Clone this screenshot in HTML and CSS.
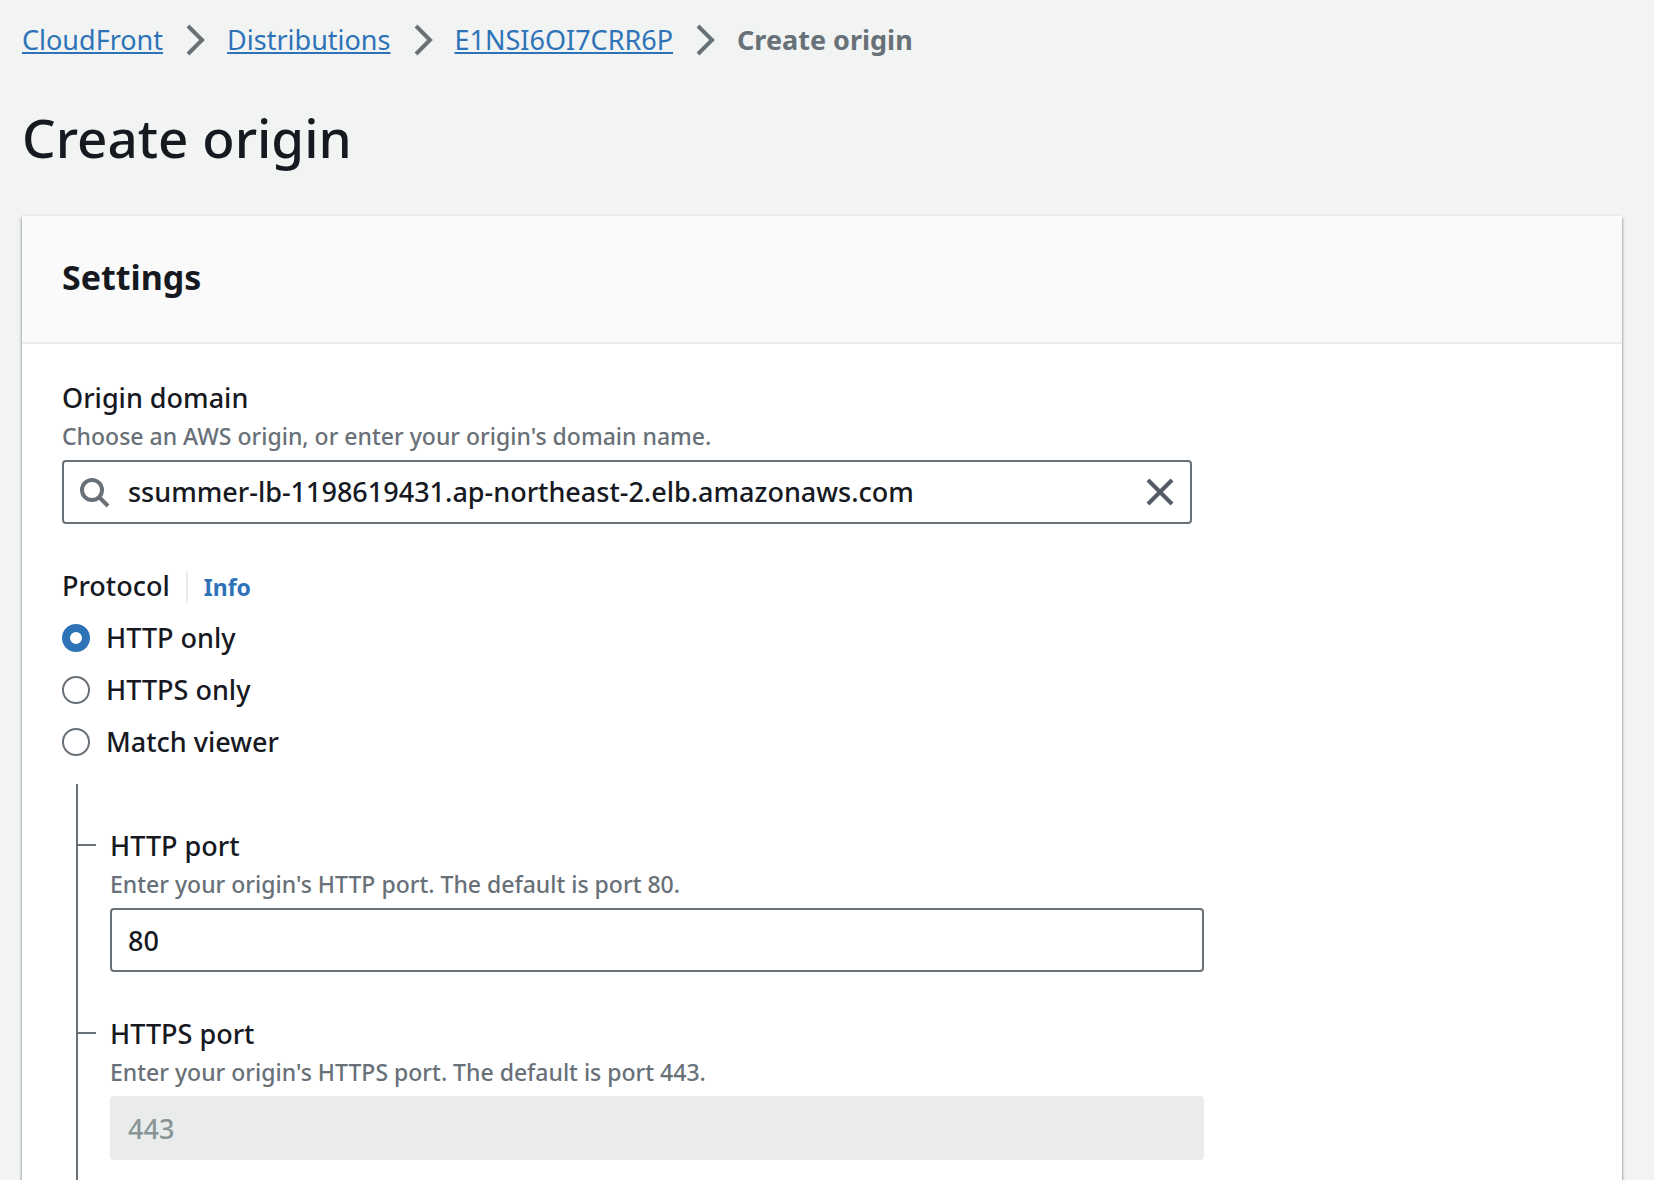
FILE: index.html
```html
<!DOCTYPE html>
<html lang="en">
<head>
  <meta charset="UTF-8" />
  <meta name="viewport" content="width=device-width, initial-scale=1" />
  <title>Create origin</title>
  <link rel="stylesheet" href="styles.css">
</head>
<body>
  <nav class="breadcrumbs" aria-label="Breadcrumbs">
    <a href="#">CloudFront</a>
    <svg class="chevron" viewBox="0 0 32 32" aria-hidden="true"><path d="M9 2l14 14L9 30" /></svg>
    <a href="#">Distributions</a>
    <svg class="chevron" viewBox="0 0 32 32" aria-hidden="true"><path d="M9 2l14 14L9 30" /></svg>
    <a href="#">E1NSI6OI7CRR6P</a>
    <svg class="chevron" viewBox="0 0 32 32" aria-hidden="true"><path d="M9 2l14 14L9 30" /></svg>
    <span class="current" aria-current="page">Create origin</span>
  </nav>

  <main class="page">
    <h1>Create origin</h1>

    <form class="card">
      <div class="card-header">
        <h2>Settings</h2>
      </div>

      <div class="card-body">
        <div class="field">
          <label for="originDomain">Origin domain</label>
          <p class="hint" id="originHint">Choose an AWS origin, or enter your origin's domain name.</p>
          <div class="search-box">
            <svg class="icon-search" viewBox="0 0 32 32" aria-hidden="true">
              <circle cx="12" cy="14" r="10" />
              <path d="M19 21l9 9" />
            </svg>
            <input id="originDomain" type="text" value="ssummer-lb-1198619431.ap-northeast-2.elb.amazonaws.com" aria-describedby="originHint" />
            <button type="button" class="clear" aria-label="Clear">
              <svg viewBox="0 0 32 32" aria-hidden="true"><path d="M4 4l24 24M28 4L4 28" /></svg>
            </button>
          </div>
        </div>

        <fieldset class="protocol">
          <legend>
            <span class="legend-text">Protocol</span>
            <a class="info" href="#">Info</a>
          </legend>
          <label class="radio"><input type="radio" name="protocol" value="http" checked /> HTTP only</label>
          <label class="radio"><input type="radio" name="protocol" value="https" /> HTTPS only</label>
          <label class="radio"><input type="radio" name="protocol" value="match" /> Match viewer</label>
        </fieldset>

        <div class="ports">
          <div class="field port">
            <label for="httpPort">HTTP port</label>
            <p class="hint" id="httpHint">Enter your origin's HTTP port. The default is port 80.</p>
            <input class="text-input" id="httpPort" type="text" inputmode="numeric" value="80" aria-describedby="httpHint" />
          </div>
          <div class="field port">
            <label for="httpsPort">HTTPS port</label>
            <p class="hint" id="httpsHint">Enter your origin's HTTPS port. The default is port 443.</p>
            <input class="text-input" id="httpsPort" type="text" inputmode="numeric" value="443" aria-describedby="httpsHint" disabled />
          </div>
        </div>
      </div>
    </form>
  </main>
</body>
</html>
```

FILE: styles.css
```css
/* Reset and base */
* {
  box-sizing: border-box;
  margin: 0;
  padding: 0;
}
body {
  background: #f2f4f3;
  font-family: "Amazon Ember", "Noto Sans", "Open Sans", sans-serif;
  font-size: 27px;
  font-weight: 500;
  line-height: 44px;
  color: #16191f;
  min-height: 100vh;
  padding: 18px 32px 0 22px;
  display: flex;
  flex-direction: column;
}
input, button {
  font: inherit;
  color: inherit;
}
a {
  color: #2e73b8;
}

/* Breadcrumbs */
.breadcrumbs {
  display: flex;
  flex-wrap: wrap;
  align-items: center;
  gap: 0 16px;
}
.breadcrumbs a {
  font-weight: 400;
  text-decoration-thickness: 2px;
  text-underline-offset: 2px;
}
.chevron {
  width: 32px;
  height: 32px;
  fill: none;
  stroke: #687078;
  stroke-width: 4;
}
.current {
  color: #687078;
  font-weight: 700;
}

/* Page */
.page {
  flex: 1;
  display: flex;
  flex-direction: column;
}
h1 {
  font-size: 53px;
  font-weight: 500;
  line-height: 72px;
  margin: 40px 0 42px;
}

/* Settings card */
.card {
  flex: 1;
  display: flex;
  flex-direction: column;
  background: #fff;
  box-shadow: 0 -2px 0 #eaeceb, 0 2px 2px rgba(0, 28, 36, 0.3), 1px 2px 3px rgba(0, 28, 36, 0.2), -1px 2px 3px rgba(0, 28, 36, 0.2);
}
.card-header {
  background: #fafafa;
  border-bottom: 2px solid #eaeceb;
  padding: 38px 40px 42px;
}
h2 {
  font-size: 34px;
  font-weight: 700;
  line-height: 46px;
}
.card-body {
  flex: 1;
  display: flex;
  flex-direction: column;
  padding: 32px 40px 0;
}

/* Fields */
.field {
  width: calc(75% - 10px);
}
.field label {
  display: block;
}
.hint {
  color: #687078;
  font-size: 23px;
  line-height: 32px;
  margin-bottom: 8px;
}
.search-box, .text-input {
  width: 100%;
  height: 64px;
  background: #fff;
  border: 2px solid #687078;
  border-radius: 4px;
}
.search-box {
  display: flex;
  align-items: center;
  padding: 0 14px 0 16px;
  gap: 16px;
}
.search-box input {
  flex: 1;
  min-width: 0;
  border: none;
  outline: none;
  background: none;
}
.icon-search {
  width: 32px;
  height: 32px;
  fill: none;
  stroke: #687078;
  stroke-width: 4;
}
.clear {
  display: flex;
  background: none;
  border: none;
  cursor: pointer;
}
.clear svg {
  width: 32px;
  height: 32px;
  stroke: #545b64;
  stroke-width: 4;
}
.text-input {
  display: block;
  padding: 0 16px;
}
.text-input:disabled {
  background: #eaeceb;
  border-color: #eaeceb;
  color: #879596;
}

/* Protocol radios */
.protocol {
  border: none;
  margin-top: 40px;
  display: flex;
  flex-direction: column;
  gap: 8px;
}
legend {
  display: flex;
  align-items: baseline;
  margin-bottom: 8px;
}
.legend-text {
  padding-right: 16px;
}
.info {
  border-left: 2px solid #eaeceb;
  padding-left: 16px;
  font-size: 23px;
  font-weight: 700;
  line-height: 32px;
  text-decoration: none;
}
.radio {
  display: flex;
  align-items: center;
  gap: 16px;
}
.radio input {
  appearance: none;
  width: 28px;
  height: 28px;
  border: 2px solid #687078;
  border-radius: 50%;
  background: #fff;
}
.radio input:checked {
  border: 8px solid #2e73b8;
}

/* Ports hang off a vertical line */
.ports {
  flex: 1;
  display: flex;
  flex-direction: column;
  gap: 40px;
  width: calc(75% - 12px);
  margin: 20px 0 0 14px;
  padding: 40px 0 20px 32px;
  border-left: 2px solid #687078;
}
.port {
  width: 100%;
  position: relative;
}
.port::before {
  content: "";
  position: absolute;
  top: 20px;
  left: -32px;
  width: 18px;
  height: 2px;
  background: #687078;
}

/* Responsive */
@media (max-width: 700px) {
  .field, .ports {
    width: auto;
  }
}
```
